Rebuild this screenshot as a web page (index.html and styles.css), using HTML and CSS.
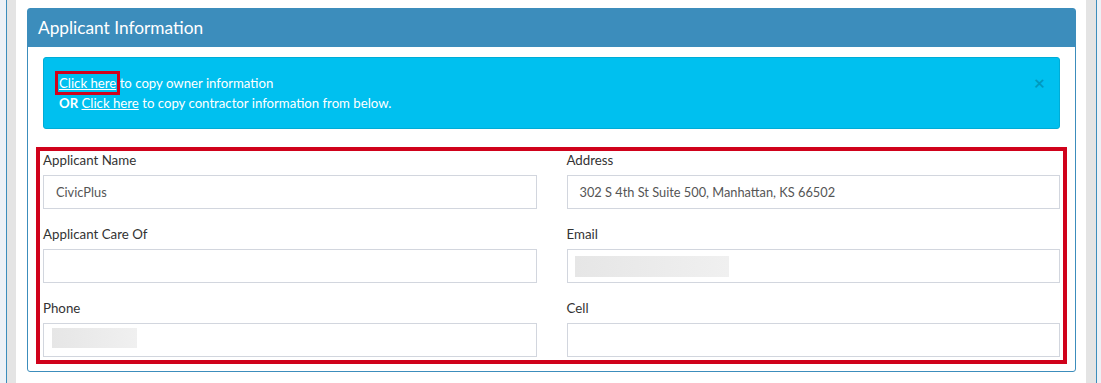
FILE: index.html
```html
<!DOCTYPE html>
<html>
<head>
<meta charset="utf-8">
<link rel="stylesheet" href="styles.css">
</head>
<body>
<div class="frame">
  <div class="page">
    <div class="panel">
      <div class="panel-header">Applicant Information</div>
      <div class="panel-body">
        <div class="alert">
          <div class="alert-text">
            <div><a class="link marked">Click here</a> to copy owner information</div>
            <div><b>OR</b> <a class="link">Click here</a> to copy contractor information from below.</div>
          </div>
          <span class="close">×</span>
        </div>
        <div class="annot">
          <div class="form-grid">
            <div class="field">
              <div class="label">Applicant Name</div>
              <div class="input">CivicPlus</div>
            </div>
            <div class="field">
              <div class="label">Address</div>
              <div class="input">302 S 4th St Suite 500, Manhattan, KS 66502</div>
            </div>
            <div class="field">
              <div class="label">Applicant Care Of</div>
              <div class="input"></div>
            </div>
            <div class="field">
              <div class="label">Email</div>
              <div class="input"><span class="blur blur-email"></span></div>
            </div>
            <div class="field">
              <div class="label">Phone</div>
              <div class="input"><span class="blur blur-phone"></span></div>
            </div>
            <div class="field">
              <div class="label">Cell</div>
              <div class="input"></div>
            </div>
          </div>
        </div>
      </div>
    </div>
  </div>
</div>
</body>
</html>
```

FILE: styles.css
```css
html, body {
  margin: 0;
  padding: 0;
}
body {
  background: #edf1f6;
  font-family: Lato, "Liberation Sans", sans-serif;
  height: 383px;
  overflow: hidden;
}
.frame {
  margin-left: 6px;
  height: 383px;
  border-left: 1px solid #3c8dbc;
  border-right: 1px solid #3c8dbc;
  background: #e4e4e4;
  padding: 0 10px 0 9px;
  box-sizing: content-box;
  width: 1070px;
}
.page {
  background: #fff;
  height: 383px;
  padding: 8px 10px 0 11px;
  box-sizing: border-box;
}
.panel {
  border: 1px solid #3c8dbc;
  border-radius: 3px;
  background: #fff;
}
.panel-header {
  background: #3c8dbc;
  color: #fff;
  font-size: 17.3px;
  height: 38px;
  line-height: 38px;
  padding: 0 10px;
}
.panel-body {
  padding: 10px 15px 7px 15px;
}
.alert {
  display: flex;
  justify-content: space-between;
  align-items: flex-start;
  background: #00c0ef;
  border: 1px solid #00acd6;
  border-radius: 3px;
  padding: 15px 14px 15px 15px;
  color: #fff;
  font-size: 13.2px;
  line-height: 20px;
  margin-bottom: 18px;
}
.link {
  color: #fff;
  text-decoration: underline;
}
.marked {
  outline: 3px solid #d0021b;
  outline-offset: 1px;
}
.close {
  color: #000;
  opacity: 0.2;
  font-size: 19px;
  font-weight: bold;
  line-height: 20px;
}
.annot {
  border: 4px solid #d0021b;
  margin: 0 -7px;
  padding: 0 3px 3px 3px;
}
.form-grid {
  display: grid;
  grid-template-columns: 1fr 1fr;
  column-gap: 30px;
  row-gap: 16px;
}
.label {
  font-size: 13.3px;
  line-height: 19px;
  color: #333;
  margin-bottom: 5px;
}
.input {
  height: 34px;
  box-sizing: border-box;
  border: 1px solid #d2d6de;
  padding: 6px 12px;
  font-size: 12.8px;
  line-height: 20px;
  color: #555;
}
.blur {
  display: block;
  background: linear-gradient(90deg, #e6e6e6, #ececec 60%, #f0f0f0);
}
.blur-email {
  margin: 0 0 0 -5px;
  width: 154px;
  height: 21px;
}
.blur-phone {
  margin: -2px 0 0 -4px;
  width: 85px;
  height: 20px;
}
```
